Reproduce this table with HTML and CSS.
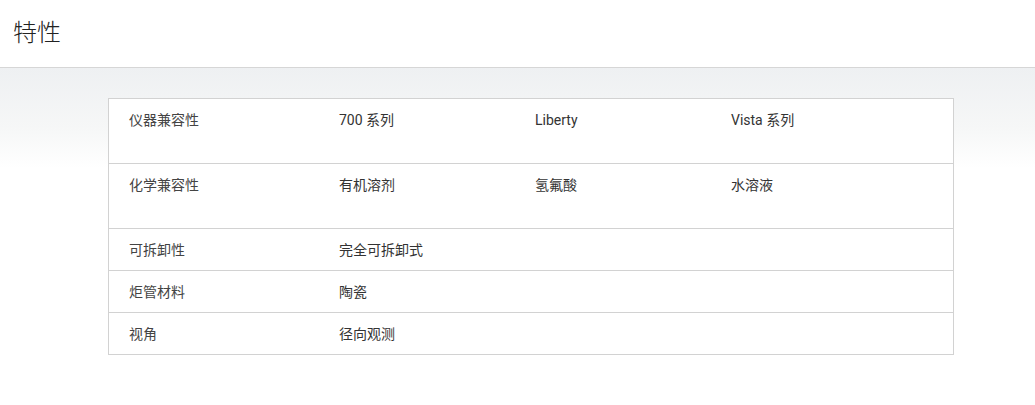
FILE: index.html
```html
<!DOCTYPE html>
<html lang="zh-CN">
<head>
<meta charset="utf-8">
<title>特性</title>
<link rel="stylesheet" href="styles.css">
</head>
<body>
<header class="page-header">
  <h1 class="page-title">特性</h1>
</header>
<main class="content">
  <div class="spec-table">
    <div class="spec-row spec-row--tall spec-row--four">
      <div class="cell label">仪器兼容性</div>
      <div class="cell value">700 系列</div>
      <div class="cell value">Liberty</div>
      <div class="cell value">Vista 系列</div>
    </div>
    <div class="spec-row spec-row--tall spec-row--four">
      <div class="cell label">化学兼容性</div>
      <div class="cell value">有机溶剂</div>
      <div class="cell value">氢氟酸</div>
      <div class="cell value">水溶液</div>
    </div>
    <div class="spec-row spec-row--two">
      <div class="cell label">可拆卸性</div>
      <div class="cell value">完全可拆卸式</div>
    </div>
    <div class="spec-row spec-row--two">
      <div class="cell label">炬管材料</div>
      <div class="cell value">陶瓷</div>
    </div>
    <div class="spec-row spec-row--two">
      <div class="cell label">视角</div>
      <div class="cell value">径向观测</div>
    </div>
  </div>
</main>
</body>
</html>
```

FILE: styles.css
```css
* { box-sizing: border-box; }

html, body {
  margin: 0;
  padding: 0;
  background: #ffffff;
}

body {
  font-family: Roboto, "Noto Sans CJK SC", sans-serif;
  color: #333;
  width: 1035px;
  height: 405px;
  overflow: hidden;
}

.page-header {
  height: 68px;
  border-bottom: 1px solid #d6d6d6;
  display: flex;
  align-items: center;
  padding-left: 13px;
}

.page-title {
  margin: 0;
  font-size: 24px;
  font-weight: 300;
  color: #222;
  line-height: 30px;
  position: relative;
  top: -1px;
}

.content {
  background: linear-gradient(to bottom, #eef0f2 0px, #f6f7f7 60px, #ffffff 100px, #ffffff 100%);
  padding: 30px 0 40px 108px;
  min-height: 337px;
}

.spec-table {
  width: 846px;
  border: 1px solid #d2d2d2;
  background: #ffffff;
}

.spec-row {
  display: grid;
  border-top: 1px solid #d2d2d2;
}

.spec-row:first-child { border-top: none; }

.spec-row--four { grid-template-columns: 210px 196px 196px 1fr; }
.spec-row--two { grid-template-columns: 210px 1fr; }

.cell {
  font-size: 14px;
  line-height: 20px;
  padding: 11px 20px 10px 20px;
}

.spec-row--tall .cell { padding-bottom: 33px; }

.label { color: #444; }
.value { color: #333; }
```
